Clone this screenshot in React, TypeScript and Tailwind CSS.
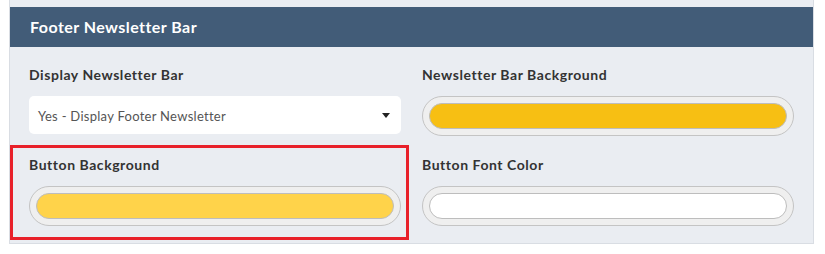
import React from "react";

function ColorField({ color }: { color: string }) {
  return (
    <div className="h-[40px] rounded-full border border-[#c4c4c4] bg-[#efefef] px-[6px] py-[6px]">
      <div
        className="h-[26px] w-full rounded-full border border-[#bdbdbd]"
        style={{ backgroundColor: color }}
      />
    </div>
  );
}

function Label({ children }: { children: React.ReactNode }) {
  return (
    <div className="mb-[11px] h-[20px] text-[14px] font-bold leading-[20px] tracking-[0.55px] text-[#333333]">
      {children}
    </div>
  );
}

export default function App() {
  return (
    <div
      className="min-h-[254px] w-[825px] bg-white"
      style={{ fontFamily: "Lato, 'Noto Sans', sans-serif" }}
    >
      <div className="ml-[9px] w-[805px] border-b border-r border-l border-[#d9dde3] bg-[#eaedf2] pt-[7px]">
        <div className="flex h-[40px] items-center bg-[#425c78] px-[20px] text-[16px] font-bold tracking-[0.45px] text-white">
          Footer Newsletter Bar
        </div>
        <div className="grid grid-cols-2 gap-x-[21px] gap-y-[19px] px-[19px] pb-[17px] pt-[18px]">
          <div>
            <Label>Display Newsletter Bar</Label>
            <div className="my-[1px] flex h-[38px] items-center justify-between rounded-[5px] bg-white pl-[9px] pr-[11px] text-[13px] tracking-[0.28px] text-[#555555]">
              <span className="pt-[3px]">Yes - Display Footer Newsletter</span>
              <svg width="8" height="5" viewBox="0 0 8 5">
                <path d="M0 0 L8 0 L4 5 Z" fill="#222" />
              </svg>
            </div>
          </div>
          <div>
            <Label>Newsletter Bar Background</Label>
            <ColorField color="#f7bf13" />
          </div>
          <div className="relative">
            <div className="pointer-events-none absolute -bottom-[14px] -left-[19px] -right-[8px] -top-[10px] border-[3px] border-[#e8202a]" />
            <Label>Button Background</Label>
            <ColorField color="#ffd34a" />
          </div>
          <div>
            <Label>Button Font Color</Label>
            <ColorField color="#ffffff" />
          </div>
        </div>
      </div>
    </div>
  );
}
